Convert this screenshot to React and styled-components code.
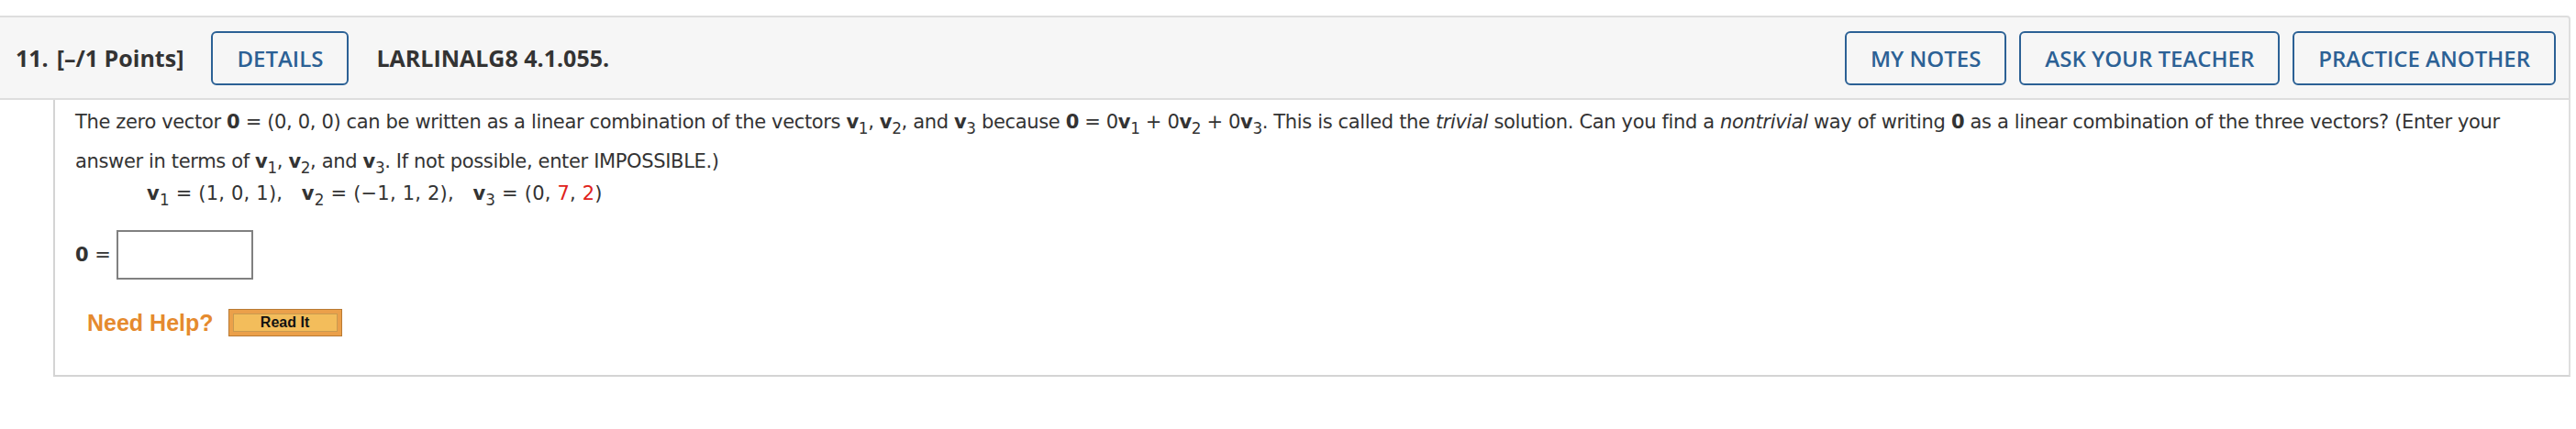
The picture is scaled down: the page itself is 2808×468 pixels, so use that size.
import React from "react";
import styled, { createGlobalStyle } from "styled-components";

const GlobalStyle = createGlobalStyle`
  html, body { margin: 0; padding: 0; background: #ffffff; }
  body { width: 2808px; }
`;

const Page = styled.div`
  padding-top: 17px;
  width: 2802px;
`;

const Header = styled.div`
  display: flex;
  align-items: center;
  height: 88px;
  padding: 0 14px 0 17px;
  background: #f6f6f6;
  border-top: 2px solid #dedede;
  border-bottom: 2px solid #dedede;
  border-right: 2px solid #dedede;
  border-top-right-radius: 4px;
  font-family: "Open Sans", sans-serif;
`;

const Title = styled.span`
  font-weight: 700;
  font-size: 25px;
  color: #333333;
  margin-right: ${(p) => p.$gap || 0}px;
  white-space: pre;
`;

const ActionButton = styled.button`
  height: 59px;
  padding: 0 26px;
  box-sizing: border-box;
  border: 2.5px solid #2c6195;
  border-radius: 6px;
  background: transparent;
  color: #2c6195;
  font-family: "Open Sans", sans-serif;
  font-weight: 600;
  font-size: 24px;
  white-space: nowrap;
  margin-right: ${(p) => p.$gap || 0}px;
`;

const ActionGroup = styled.div`
  display: flex;
  gap: 14px;
  margin-left: auto;
`;

const Card = styled.div`
  margin-left: 58px;
  padding: 3px 0 42px 22px;
  border-left: 2px solid #d4d4d4;
  border-right: 2px solid #dedede;
  border-bottom: 2px solid #d4d4d4;
  font-family: "DejaVu Sans", Verdana, sans-serif;
  font-size: 21px;
  letter-spacing: -0.35px;
  color: #333333;
`;

const Prompt = styled.p`
  margin: 0;
  line-height: 43px;
  white-space: nowrap;
`;

const Sub = styled.sub`
  font-size: 0.8em;
  vertical-align: -6px;
  line-height: 0;
`;

const Bold = styled.b`
  font-weight: 700;
`;

const VectorLine = styled.div`
  line-height: 26px;
  padding-left: 78px;
  letter-spacing: 0.2px;
  white-space: pre;
`;

const Red = styled.span`
  color: #e0221b;
`;

const AnswerRow = styled.div`
  display: flex;
  align-items: center;
  margin-top: 27px;
`;

const AnswerLabel = styled.span`
  font-size: 21px;
  letter-spacing: 0;
  white-space: pre;
`;

const AnswerInput = styled.input`
  width: 149px;
  height: 54px;
  box-sizing: border-box;
  margin: 0 0 0 6px;
  border: 2px solid #808080;
  background: #ffffff;
`;

const HelpRow = styled.div`
  display: flex;
  align-items: center;
  gap: 16px;
  margin-top: 32px;
  margin-left: 13px;
  letter-spacing: 0;
`;

const HelpText = styled.span`
  font-family: "Liberation Sans", Arial, sans-serif;
  font-weight: 700;
  font-size: 25px;
  color: #e58a2e;
`;

const ReadItButton = styled.button`
  width: 124px;
  height: 30px;
  box-sizing: border-box;
  padding: 0;
  border: 1px solid #b97a34;
  background: #f3bd5b;
  box-shadow: inset 0 0 0 4px #eba04a, inset 0 0 0 5px #c99a50;
  font-family: "Liberation Sans", Arial, sans-serif;
  font-weight: 700;
  font-size: 16px;
  color: #111111;
`;

const V = ({ n }) => (
  <>
    <Bold>v</Bold>
    <Sub>{n}</Sub>
  </>
);

export default function App() {
  return (
    <>
      <GlobalStyle />
      <Page>
        <Header>
          <Title $gap={9}>11.</Title>
          <Title $gap={30}>[–/1 Points]</Title>
          <ActionButton $gap={30}>DETAILS</ActionButton>
          <Title>LARLINALG8 4.1.055.</Title>
          <ActionGroup>
            <ActionButton>MY NOTES</ActionButton>
            <ActionButton>ASK YOUR TEACHER</ActionButton>
            <ActionButton>PRACTICE ANOTHER</ActionButton>
          </ActionGroup>
        </Header>
        <Card>
          <Prompt>
            The zero vector <Bold>0</Bold> = (0, 0, 0) can be written as a linear combination of the vectors{" "}
            <V n="1" />, <V n="2" />, and <V n="3" /> because <Bold>0</Bold> = 0<V n="1" /> + 0<V n="2" /> + 0
            <V n="3" />. This is called the <i>trivial</i> solution. Can you find a <i>nontrivial</i> way of writing{" "}
            <Bold>0</Bold> as a linear combination of the three vectors? (Enter your
            <br />
            answer in terms of <V n="1" />, <V n="2" />, and <V n="3" />. If not possible, enter IMPOSSIBLE.)
          </Prompt>
          <VectorLine>
            <V n="1" /> = (1, 0, 1),   <V n="2" /> = (−1, 1, 2),   <V n="3" /> = (0, <Red>7</Red>, <Red>2</Red>)
          </VectorLine>
          <AnswerRow>
            <AnswerLabel>
              <Bold>0</Bold> =
            </AnswerLabel>
            <AnswerInput type="text" />
          </AnswerRow>
          <HelpRow>
            <HelpText>Need Help?</HelpText>
            <ReadItButton>Read It</ReadItButton>
          </HelpRow>
        </Card>
      </Page>
    </>
  );
}
